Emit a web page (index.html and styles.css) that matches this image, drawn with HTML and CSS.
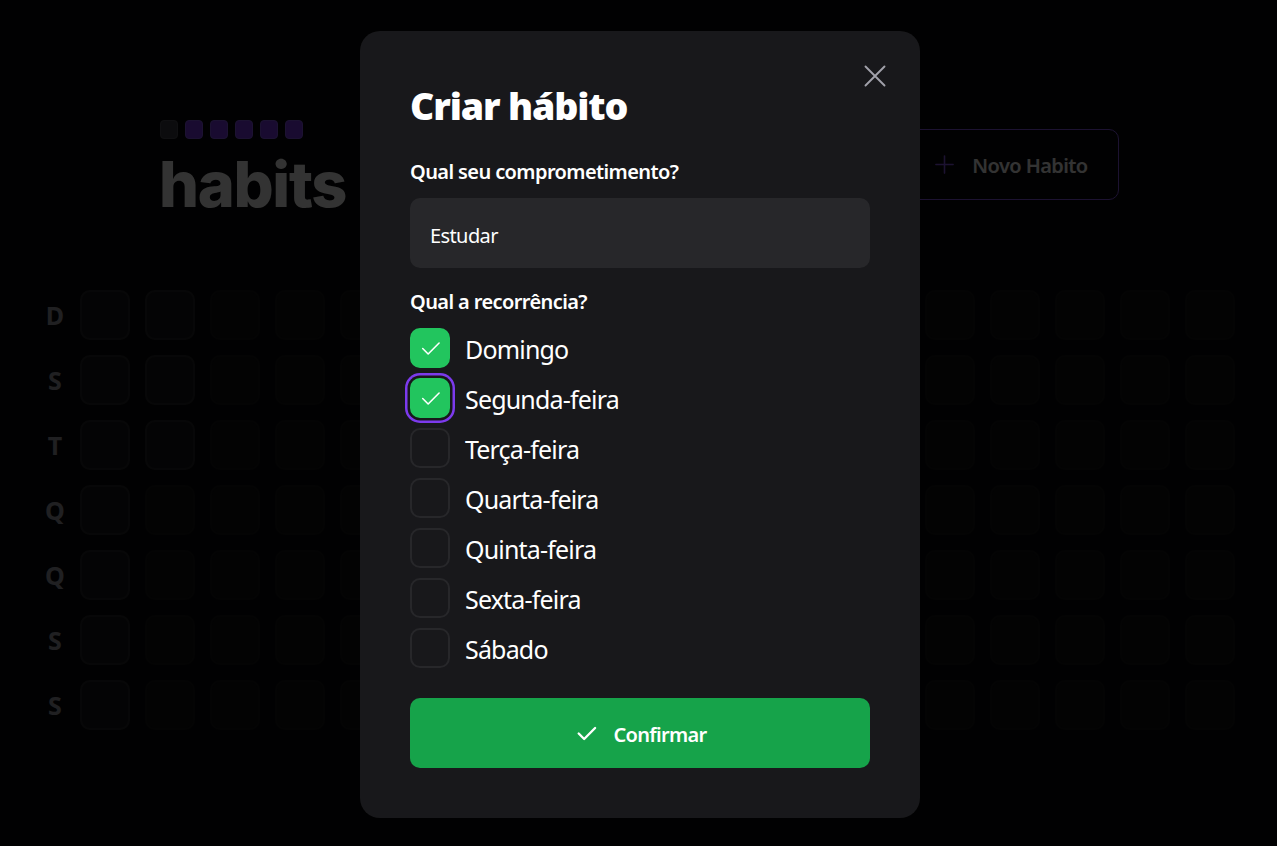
FILE: index.html
```html
<!DOCTYPE html>
<html lang="pt-BR">
<head>
<meta charset="utf-8">
<title>habits</title>
<link rel="stylesheet" href="styles.css">
</head>
<body>
<div class="page">
  <div class="content">
    <header class="header">
      <div class="logo">
        <div class="logo-squares">
          <span class="logo-sq logo-sq-empty"></span>
          <span class="logo-sq"></span>
          <span class="logo-sq"></span>
          <span class="logo-sq"></span>
          <span class="logo-sq"></span>
          <span class="logo-sq"></span>
        </div>
        <span class="logo-text">habits</span>
      </div>
      <button class="new-habit" type="button">
        <svg class="plus" viewBox="0 0 256 256" width="25" height="25"><path d="M40 128h176M128 40v176" fill="none" stroke="currentColor" stroke-width="16" stroke-linecap="round"/></svg>
        <span class="new-habit-text">Novo Habito</span>
      </button>
    </header>
    <div class="summary">
      <div class="weekdays">
        <div class="weekday">D</div><div class="weekday">S</div><div class="weekday">T</div><div class="weekday">Q</div><div class="weekday">Q</div><div class="weekday">S</div><div class="weekday">S</div>
      </div>
      <div class="days">
        <div class="day"></div><div class="day"></div><div class="day"></div><div class="day"></div><div class="day"></div><div class="day"></div><div class="day"></div>
        <div class="day"></div><div class="day"></div><div class="day"></div><div class="day future"></div><div class="day future"></div><div class="day future"></div><div class="day future"></div>
        <div class="day future"></div><div class="day future"></div><div class="day future"></div><div class="day future"></div><div class="day future"></div><div class="day future"></div><div class="day future"></div>
        <div class="day future"></div><div class="day future"></div><div class="day future"></div><div class="day future"></div><div class="day future"></div><div class="day future"></div><div class="day future"></div>
        <div class="day future"></div><div class="day future"></div><div class="day future"></div><div class="day future"></div><div class="day future"></div><div class="day future"></div><div class="day future"></div>
        <div class="day future"></div><div class="day future"></div><div class="day future"></div><div class="day future"></div><div class="day future"></div><div class="day future"></div><div class="day future"></div>
        <div class="day future"></div><div class="day future"></div><div class="day future"></div><div class="day future"></div><div class="day future"></div><div class="day future"></div><div class="day future"></div>
        <div class="day future"></div><div class="day future"></div><div class="day future"></div><div class="day future"></div><div class="day future"></div><div class="day future"></div><div class="day future"></div>
        <div class="day future"></div><div class="day future"></div><div class="day future"></div><div class="day future"></div><div class="day future"></div><div class="day future"></div><div class="day future"></div>
        <div class="day future"></div><div class="day future"></div><div class="day future"></div><div class="day future"></div><div class="day future"></div><div class="day future"></div><div class="day future"></div>
        <div class="day future"></div><div class="day future"></div><div class="day future"></div><div class="day future"></div><div class="day future"></div><div class="day future"></div><div class="day future"></div>
        <div class="day future"></div><div class="day future"></div><div class="day future"></div><div class="day future"></div><div class="day future"></div><div class="day future"></div><div class="day future"></div>
        <div class="day future"></div><div class="day future"></div><div class="day future"></div><div class="day future"></div><div class="day future"></div><div class="day future"></div><div class="day future"></div>
        <div class="day future"></div><div class="day future"></div><div class="day future"></div><div class="day future"></div><div class="day future"></div><div class="day future"></div><div class="day future"></div>
        <div class="day future"></div><div class="day future"></div><div class="day future"></div><div class="day future"></div><div class="day future"></div><div class="day future"></div><div class="day future"></div>
        <div class="day future"></div><div class="day future"></div><div class="day future"></div><div class="day future"></div><div class="day future"></div><div class="day future"></div><div class="day future"></div>
        <div class="day future"></div><div class="day future"></div><div class="day future"></div><div class="day future"></div><div class="day future"></div><div class="day future"></div><div class="day future"></div>
        <div class="day future"></div><div class="day future"></div><div class="day future"></div><div class="day future"></div><div class="day future"></div><div class="day future"></div><div class="day future"></div>
      </div>
    </div>
  </div>
</div>

<div class="overlay"></div>

<div class="modal" role="dialog">
  <button class="close" type="button" aria-label="Fechar">
    <svg viewBox="0 0 30 30" width="30" height="30"><path d="M5.5 5.5l19 19M24.5 5.5l-19 19" fill="none" stroke="currentColor" stroke-width="1.9" stroke-linecap="round"/></svg>
  </button>
  <h1 class="modal-title">Criar hábito</h1>
  <form class="form">
    <label class="form-label" for="title">Qual seu comprometimento?</label>
    <input class="form-input" id="title" type="text" value="Estudar" placeholder="ex.: Exercícios, dormir bem, etc...">
    <label class="form-label form-label-second">Qual a recorrência?</label>
    <div class="checks">
      <div class="check-row">
        <span class="check-box checked"><svg viewBox="0 0 256 256" width="25" height="25"><polyline points="216 72 104 184 48 128" fill="none" stroke="#fff" stroke-width="16" stroke-linecap="round" stroke-linejoin="round"/></svg></span>
        <span class="check-text">Domingo</span>
      </div>
      <div class="check-row">
        <span class="check-box checked focused"><svg viewBox="0 0 256 256" width="25" height="25"><polyline points="216 72 104 184 48 128" fill="none" stroke="#fff" stroke-width="16" stroke-linecap="round" stroke-linejoin="round"/></svg></span>
        <span class="check-text">Segunda-feira</span>
      </div>
      <div class="check-row">
        <span class="check-box"></span>
        <span class="check-text">Terça-feira</span>
      </div>
      <div class="check-row">
        <span class="check-box"></span>
        <span class="check-text">Quarta-feira</span>
      </div>
      <div class="check-row">
        <span class="check-box"></span>
        <span class="check-text">Quinta-feira</span>
      </div>
      <div class="check-row">
        <span class="check-box"></span>
        <span class="check-text">Sexta-feira</span>
      </div>
      <div class="check-row">
        <span class="check-box"></span>
        <span class="check-text">Sábado</span>
      </div>
    </div>
    <button class="confirm" type="button">
      <svg viewBox="0 0 256 256" width="25" height="25"><polyline points="216 72 104 184 48 128" fill="none" stroke="#fff" stroke-width="24" stroke-linecap="round" stroke-linejoin="round"/></svg>
      <span class="confirm-text">Confirmar</span>
    </button>
  </form>
</div>
</body>
</html>
```

FILE: styles.css
```css
* {
  box-sizing: border-box;
}

html, body {
  margin: 0;
  padding: 0;
  background: #09090a;
  color: #ffffff;
  font-family: "Noto Sans", "Open Sans", sans-serif;
  overflow: hidden;
}

.page {
  width: 100%;
  height: 846px;
  padding: 119px 30px 0;
}

.content {
  display: flex;
  flex-direction: column;
  gap: 80px;
}

/* header */
.header {
  width: 960px;
  margin: 0 auto;
  padding-left: 1.5px;
  display: flex;
  align-items: center;
  justify-content: space-between;
}

.logo {
  display: flex;
  flex-direction: column;
  height: 91px;
  padding-top: 1px;
}

.logo-squares {
  display: flex;
  gap: 7px;
}

.logo-sq {
  width: 18px;
  height: 19px;
  border-radius: 4px;
  background: #7c3aed;
  border: 1.5px solid #8b5cf6;
}

.logo-sq-empty {
  background: #3f3f46;
  border-color: #52525b;
}

.logo-text {
  font-family: "Inter", sans-serif;
  font-weight: 800;
  font-size: 63px;
  line-height: 62px;
  letter-spacing: -1.3px;
  margin-top: 14px;
  margin-left: -1px;
  color: #ffffff;
}

.new-habit {
  display: flex;
  align-items: center;
  gap: 15px;
  height: 71px;
  padding: 0 30px;
  border: 1.25px solid #8b5cf6;
  border-radius: 10px;
  background: transparent;
  color: #ffffff;
  font-family: "Noto Sans", sans-serif;
  font-weight: 600;
  font-size: 20px;
  line-height: 30px;
  letter-spacing: -0.03em;
}

.new-habit-text {
  padding-top: 2px;
}

.plus {
  color: #8b5cf6;
}

/* summary table */
.summary {
  display: flex;
}

.weekdays {
  display: grid;
  grid-template-rows: repeat(7, 50px);
  gap: 15px;
}

.weekday {
  width: 50px;
  height: 50px;
  display: flex;
  align-items: center;
  justify-content: center;
  color: #a1a1aa;
  font-weight: 700;
  font-size: 25px;
}

.days {
  display: grid;
  grid-template-rows: repeat(7, 50px);
  grid-auto-flow: column;
  grid-auto-columns: 50px;
  gap: 15px;
}

.day {
  width: 50px;
  height: 50px;
  border-radius: 10px;
  background: #18181b;
  border: 2.5px solid #27272a;
}

.day.future {
  opacity: 0.4;
}

/* overlay & modal */
.overlay {
  position: fixed;
  inset: 0;
  background: rgba(0, 0, 0, 0.8);
}

.modal {
  position: fixed;
  top: 31px;
  left: 360px;
  width: 560px;
  padding: 50px;
  background: #18181b;
  border-radius: 20px;
}

.close {
  position: absolute;
  top: 30px;
  right: 30px;
  width: 30px;
  height: 30px;
  padding: 0;
  border: none;
  background: transparent;
  color: #a1a1aa;
  display: flex;
}

.modal-title {
  margin: 0;
  padding-top: 3px;
  font-size: 37.5px;
  line-height: 44px;
  font-weight: 900;
  letter-spacing: -0.03em;
}

.form {
  margin-top: 30px;
  display: flex;
  flex-direction: column;
}

.form-label {
  padding-top: 3px;
  font-size: 20px;
  font-weight: 600;
  line-height: 22px;
  letter-spacing: -0.03em;
}

.form-label-second {
  margin-top: 20px;
}

.form-input {
  margin-top: 15px;
  padding: 22px 20px 18px;
  border: none;
  border-radius: 10px;
  background: #27272a;
  color: #ffffff;
  font-family: "Noto Sans", sans-serif;
  font-size: 20px;
  line-height: 30px;
  height: 70px;
  letter-spacing: -0.03em;
  outline: none;
}

.checks {
  margin-top: 15px;
  display: flex;
  flex-direction: column;
  gap: 10px;
}

.check-row {
  display: flex;
  align-items: center;
  gap: 15px;
}

.check-box {
  width: 40px;
  height: 40px;
  flex-shrink: 0;
  border-radius: 10px;
  border: 2.5px solid #27272a;
  background: #18181b;
  display: flex;
  align-items: center;
  justify-content: center;
}

.check-box.checked {
  background: #22c55e;
  border-color: #22c55e;
}

.check-box.focused {
  box-shadow: 0 0 0 2.5px #18181b, 0 0 0 5px #7c3aed;
}

.check-text {
  padding-top: 4px;
  font-size: 25px;
  line-height: 1.25;
  letter-spacing: -0.033em;
}

.confirm {
  margin-top: 30px;
  height: 70px;
  padding: 20px;
  border: none;
  border-radius: 10px;
  background: #16a34a;
  color: #ffffff;
  display: flex;
  align-items: center;
  justify-content: center;
  gap: 15px;
  font-family: "Noto Sans", sans-serif;
  font-weight: 600;
  font-size: 20px;
  line-height: 30px;
  letter-spacing: -0.035em;
}

.confirm-text {
  padding-top: 3px;
}
```
